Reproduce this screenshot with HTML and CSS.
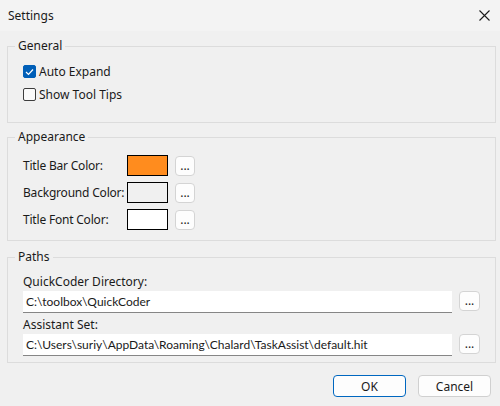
FILE: index.html
```html
<!DOCTYPE html>
<html lang="en">
<head>
  <meta charset="UTF-8" />
  <title>Settings</title>
  <link rel="stylesheet" href="styles.css">
</head>
<body>
  <div class="window">
    <div class="titlebar">
      <span class="title">Settings</span>
      <span class="close">
        <svg width="11" height="11" viewBox="0 0 11 11"><path d="M0.5 0.5 L10.5 10.5 M10.5 0.5 L0.5 10.5" stroke="#1a1a1a" stroke-width="1.1" fill="none"/></svg>
      </span>
    </div>

    <div class="content">
      <fieldset class="group group-general">
        <legend>General</legend>
        <label class="check-row">
          <span class="checkbox checked">
            <svg width="9" height="8" viewBox="0 0 9 8"><path d="M1 4 L3.5 6.5 L8 1.5" stroke="#fff" stroke-width="1.2" fill="none"/></svg>
          </span>
          <span>Auto Expand</span>
        </label>
        <label class="check-row">
          <span class="checkbox"></span>
          <span>Show Tool Tips</span>
        </label>
      </fieldset>

      <fieldset class="group group-appearance">
        <legend>Appearance</legend>
        <div class="color-row">
          <span class="color-label">Title Bar Color:</span>
          <span class="swatch swatch-orange"></span>
          <button class="dots">...</button>
        </div>
        <div class="color-row">
          <span class="color-label">Background Color:</span>
          <span class="swatch swatch-grey"></span>
          <button class="dots">...</button>
        </div>
        <div class="color-row">
          <span class="color-label">Title Font Color:</span>
          <span class="swatch swatch-white"></span>
          <button class="dots">...</button>
        </div>
      </fieldset>

      <fieldset class="group group-paths">
        <legend>Paths</legend>
        <div class="path-label first">QuickCoder Directory:</div>
        <div class="path-row">
          <div class="textbox">C:\toolbox\QuickCoder</div>
          <button class="dots">...</button>
        </div>
        <div class="path-label">Assistant Set:</div>
        <div class="path-row">
          <div class="textbox">C:\Users\suriy\AppData\Roaming\Chalard\TaskAssist\default.hit</div>
          <button class="dots">...</button>
        </div>
      </fieldset>

      <div class="actions">
        <button class="btn btn-default">OK</button>
        <button class="btn">Cancel</button>
      </div>
    </div>
  </div>
</body>
</html>
```

FILE: styles.css
```css
* {
  margin: 0;
  padding: 0;
  box-sizing: border-box;
}

html, body {
  width: 500px;
  height: 406px;
  overflow: hidden;
  font-family: "Noto Sans", "Open Sans", sans-serif;
  font-size: 12px;
  color: #1a1a1a;
  background: #f0f0f0;
}

.window {
  height: 406px;
  display: flex;
  flex-direction: column;
}

.titlebar {
  height: 31px;
  background: #f3f3f3;
  display: flex;
  align-items: center;
  justify-content: space-between;
  padding: 0 10px 0 8px;
}

.title {
  line-height: 16px;
  margin-top: 1px;
}

.close {
  display: flex;
}

.content {
  padding: 7px 5px 0 7px;
}

.group {
  border: 1px solid #dcdcdc;
  border-radius: 0;
  width: 489px;
  padding: 0 0 0 15px;
}

.group legend {
  line-height: 16px;
  margin-left: -8px;
  padding: 0 3px;
}

.group-general {
  height: 85px;
  padding-top: 6px;
}

.group-appearance {
  margin-top: 6px;
  height: 112px;
  padding-top: 7px;
}

.group-paths {
  margin-top: 8px;
  height: 114px;
  padding-right: 15px;
}

.check-row {
  display: flex;
  align-items: center;
  gap: 3px;
  height: 23px;
}

.checkbox {
  width: 13px;
  height: 13px;
  border: 1px solid #3d3d3d;
  border-radius: 2px;
  background: #fafafa;
  display: flex;
  align-items: center;
  justify-content: center;
}

.checkbox.checked {
  background: #005fb8;
  border-color: #005fb8;
}

.color-row {
  display: flex;
  align-items: center;
  height: 27px;
}

.color-label {
  width: 104px;
  flex: none;
  white-space: nowrap;
  letter-spacing: -0.2px;
}

.swatch {
  width: 41px;
  height: 21px;
  border: 1px solid #000;
}

.swatch-orange { background: #ff8c1e; }
.swatch-grey { background: #f0f0f0; }
.swatch-white { background: #ffffff; }

.dots {
  width: 20px;
  height: 20px;
  margin-left: 7px;
  border: 1px solid #d4d4d4;
  border-radius: 4px;
  background: #fdfdfd;
  font-family: inherit;
  font-size: 12px;
  color: #1a1a1a;
  line-height: 14px;
}

.path-label {
  height: 17px;
  line-height: 17px;
  margin-top: 3px;
}

.path-label.first {
  margin-top: 8px;
}

.path-row {
  display: flex;
  align-items: flex-start;
  margin-top: 1px;
  gap: 7px;
}

.textbox {
  flex: 1;
  height: 22px;
  background: #fff;
  border-bottom: 1px solid #868686;
  padding: 0 3px;
  line-height: 21px;
  white-space: nowrap;
  overflow: hidden;
  font-family: Lato, "Noto Sans", sans-serif;
  font-size: 12px;
}

.path-row .dots {
  width: 21px;
  margin-left: 0;
}

.actions {
  display: flex;
  justify-content: flex-end;
  gap: 12px;
  margin-top: 12px;
  padding-right: 4px;
}

.btn {
  width: 73px;
  height: 22px;
  border: 1px solid #d0d0d0;
  border-radius: 4px;
  background: #fdfdfd;
  font-family: inherit;
  font-size: 12px;
  color: #1a1a1a;
}

.btn-default {
  border-color: #0067c0;
}
```
